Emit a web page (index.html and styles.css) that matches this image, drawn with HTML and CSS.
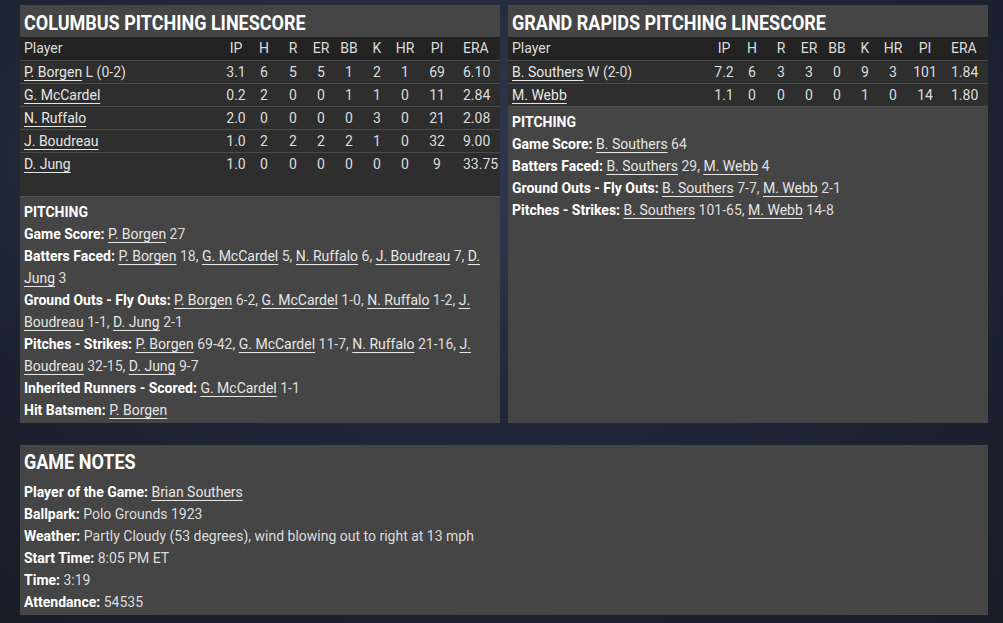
FILE: index.html
```html
<!DOCTYPE html>
<html lang="en">
<head>
<meta charset="utf-8">
<title>Pitching Linescore</title>
<link rel="stylesheet" href="styles.css">
</head>
<body>
<div class="page">
  <div class="top">
    <section class="panel">
      <h2 class="title"><span class="title-text">COLUMBUS PITCHING LINESCORE</span></h2>
      <div class="tablewrap tablewrap--tall">
        <table class="line">
          <colgroup>
            <col class="c-player"><col class="c-ip"><col class="c-h"><col class="c-r"><col class="c-er"><col class="c-bb"><col class="c-k"><col class="c-hr"><col class="c-pi"><col class="c-era">
          </colgroup>
          <thead>
            <tr><th class="name">Player</th><th>IP</th><th>H</th><th>R</th><th>ER</th><th>BB</th><th>K</th><th>HR</th><th>PI</th><th class="era">ERA</th></tr>
          </thead>
          <tbody>
            <tr><td class="name"><a href="#">P. Borgen</a> L (0-2)</td><td>3.1</td><td>6</td><td>5</td><td>5</td><td>1</td><td>2</td><td>1</td><td>69</td><td class="era">6.10</td></tr>
            <tr><td class="name"><a href="#">G. McCardel</a></td><td>0.2</td><td>2</td><td>0</td><td>0</td><td>1</td><td>1</td><td>0</td><td>11</td><td class="era">2.84</td></tr>
            <tr><td class="name"><a href="#">N. Ruffalo</a></td><td>2.0</td><td>0</td><td>0</td><td>0</td><td>0</td><td>3</td><td>0</td><td>21</td><td class="era">2.08</td></tr>
            <tr><td class="name"><a href="#">J. Boudreau</a></td><td>1.0</td><td>2</td><td>2</td><td>2</td><td>2</td><td>1</td><td>0</td><td>32</td><td class="era">9.00</td></tr>
            <tr><td class="name"><a href="#">D. Jung</a></td><td>1.0</td><td>0</td><td>0</td><td>0</td><td>0</td><td>0</td><td>0</td><td>9</td><td class="era">33.75</td></tr>
          </tbody>
        </table>
      </div>
      <div class="notes-body">
        <div class="sub">PITCHING</div>
        <div><b>Game Score:</b> <a href="#">P. Borgen</a> 27</div>
        <div><b>Batters Faced:</b> <a href="#">P. Borgen</a> 18, <a href="#">G. McCardel</a> 5, <a href="#">N. Ruffalo</a> 6, <a href="#">J. Boudreau</a> 7, <a href="#">D. Jung</a> 3</div>
        <div><b>Ground Outs - Fly Outs:</b> <a href="#">P. Borgen</a> 6-2, <a href="#">G. McCardel</a> 1-0, <a href="#">N. Ruffalo</a> 1-2, <a href="#">J. Boudreau</a> 1-1, <a href="#">D. Jung</a> 2-1</div>
        <div><b>Pitches - Strikes:</b> <a href="#">P. Borgen</a> 69-42, <a href="#">G. McCardel</a> 11-7, <a href="#">N. Ruffalo</a> 21-16, <a href="#">J. Boudreau</a> 32-15, <a href="#">D. Jung</a> 9-7</div>
        <div><b>Inherited Runners - Scored:</b> <a href="#">G. McCardel</a> 1-1</div>
        <div><b>Hit Batsmen:</b> <a href="#">P. Borgen</a></div>
      </div>
    </section>
    <section class="panel">
      <h2 class="title"><span class="title-text">GRAND RAPIDS PITCHING LINESCORE</span></h2>
      <div class="tablewrap">
        <table class="line">
          <colgroup>
            <col class="c-player"><col class="c-ip"><col class="c-h"><col class="c-r"><col class="c-er"><col class="c-bb"><col class="c-k"><col class="c-hr"><col class="c-pi"><col class="c-era">
          </colgroup>
          <thead>
            <tr><th class="name">Player</th><th>IP</th><th>H</th><th>R</th><th>ER</th><th>BB</th><th>K</th><th>HR</th><th>PI</th><th class="era">ERA</th></tr>
          </thead>
          <tbody>
            <tr><td class="name"><a href="#">B. Southers</a> W (2-0)</td><td>7.2</td><td>6</td><td>3</td><td>3</td><td>0</td><td>9</td><td>3</td><td>101</td><td class="era">1.84</td></tr>
            <tr><td class="name"><a href="#">M. Webb</a></td><td>1.1</td><td>0</td><td>0</td><td>0</td><td>0</td><td>1</td><td>0</td><td>14</td><td class="era">1.80</td></tr>
          </tbody>
        </table>
      </div>
      <div class="notes-body">
        <div class="sub">PITCHING</div>
        <div><b>Game Score:</b> <a href="#">B. Southers</a> 64</div>
        <div><b>Batters Faced:</b> <a href="#">B. Southers</a> 29, <a href="#">M. Webb</a> 4</div>
        <div><b>Ground Outs - Fly Outs:</b> <a href="#">B. Southers</a> 7-7, <a href="#">M. Webb</a> 2-1</div>
        <div><b>Pitches - Strikes:</b> <a href="#">B. Southers</a> 101-65, <a href="#">M. Webb</a> 14-8</div>
      </div>
    </section>
  </div>
  <section class="panel panel--notes">
    <h2 class="title title--notes"><span class="title-text">GAME NOTES</span></h2>
    <div class="notes-body notes-body--game">
      <div><b>Player of the Game:</b> <a href="#">Brian Southers</a></div>
      <div><b>Ballpark:</b> Polo Grounds 1923</div>
      <div><b>Weather:</b> Partly Cloudy (53 degrees), wind blowing out to right at 13 mph</div>
      <div><b>Start Time:</b> 8:05 PM ET</div>
      <div><b>Time:</b> 3:19</div>
      <div><b>Attendance:</b> 54535</div>
    </div>
  </section>
</div>
</body>
</html>
```

FILE: styles.css
```css
* { box-sizing: border-box; }
html, body { margin: 0; padding: 0; }
body {
  width: 1003px;
  height: 623px;
  overflow: hidden;
  background:
    radial-gradient(ellipse 60% 40% at 35% 25%, rgba(60, 75, 105, 0.35) 0%, rgba(60, 75, 105, 0) 100%),
    radial-gradient(ellipse at 50% 30%, #273044 0%, #1d2433 55%, #181d28 100%);
  font-family: "Roboto", "Liberation Sans", sans-serif;
  font-size: 14px;
  color: #dcdcdc;
}
.page {
  padding: 5px 15px 0 20px;
}
.top {
  display: grid;
  grid-template-columns: 480px 480px;
  column-gap: 8px;
  height: 418px;
}
.panel {
  background: #454545;
  display: flex;
  flex-direction: column;
}
.title {
  margin: 0;
  height: 32px;
  padding: 3px 0 0 4px;
  line-height: 30px;
  font-size: 20px;
  font-weight: 700;
  color: #fff;
  white-space: nowrap;
}
.title-text {
  display: inline-block;
  transform: scaleX(0.9);
  transform-origin: left center;
}
.tablewrap {
  background: #2e2e2e;
  border-bottom: 1px solid #505050;
}
.tablewrap--tall { height: 160px; }
.line {
  width: 100%;
  border-collapse: collapse;
  table-layout: fixed;
}
.c-player { width: 202px; }
.c-ip { width: 28px; }
.c-h { width: 28px; }
.c-r { width: 30px; }
.c-er { width: 26px; }
.c-bb { width: 30px; }
.c-k { width: 26px; }
.c-hr { width: 30px; }
.c-pi { width: 34px; }
.c-era { width: 46px; }
.line th, .line td {
  height: 23px;
  padding: 0;
  text-align: center;
  font-weight: 400;
  white-space: nowrap;
  color: #dcdcdc;
}
.line thead tr { background: #232323; }
.line tbody tr { border-top: 1px solid #4a4a4a; }
.line .name { text-align: left; padding-left: 4px; }
.line .era { text-align: left; padding-left: 9px; }
a { color: #e6e6e6; text-decoration: underline; text-underline-offset: 3px; }
.notes-body {
  padding: 4px 4px 0 4px;
  line-height: 22px;
}
.notes-body b { color: #fff; font-weight: 700; }
.sub { font-weight: 700; color: #fff; }
.panel--notes {
  margin-top: 22px;
  width: 968px;
  height: 170px;
}
.title--notes { height: 36px; padding-top: 0; line-height: 35px; }
.notes-body--game { padding-top: 0; }
```
